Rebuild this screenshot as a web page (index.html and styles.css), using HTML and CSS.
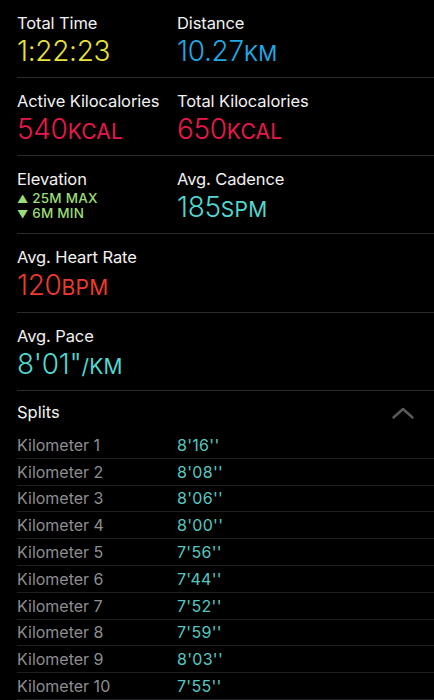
FILE: index.html
```html
<!DOCTYPE html>
<html>
<head>
<meta charset="utf-8">
<link rel="stylesheet" href="styles.css">
</head>
<body>
<div class="page">
  <div class="row">
    <div class="cell">
      <div class="label">Total Time</div>
      <div class="value yellow">1:22:23</div>
    </div>
    <div class="cell">
      <div class="label">Distance</div>
      <div class="value blue">10.27<span class="unit">KM</span></div>
    </div>
  </div>
  <div class="row">
    <div class="cell">
      <div class="label">Active Kilocalories</div>
      <div class="value pink">540<span class="unit">KCAL</span></div>
    </div>
    <div class="cell">
      <div class="label">Total Kilocalories</div>
      <div class="value pink">650<span class="unit">KCAL</span></div>
    </div>
  </div>
  <div class="row">
    <div class="cell">
      <div class="label">Elevation</div>
      <div class="elev first"><span class="tri">▲</span> 25M MAX</div>
      <div class="elev"><span class="tri">▼</span> 6M MIN</div>
    </div>
    <div class="cell">
      <div class="label">Avg. Cadence</div>
      <div class="value cyan">185<span class="unit">SPM</span></div>
    </div>
  </div>
  <div class="row tall">
    <div class="cell">
      <div class="label">Avg. Heart Rate</div>
      <div class="value red">120<span class="unit">BPM</span></div>
    </div>
  </div>
  <div class="row">
    <div class="cell">
      <div class="label">Avg. Pace</div>
      <div class="value cyan">8'01"<span class="unit">/KM</span></div>
    </div>
  </div>
  <div class="splits-head">
    <span class="splits-title">Splits</span>
    <svg class="chev" width="22" height="12" viewBox="0 0 22 12"><path d="M1.5 10.5 L11 2 L20.5 10.5" fill="none" stroke="#5a5a5e" stroke-width="2.4" stroke-linecap="round" stroke-linejoin="round"/></svg>
  </div>
  <div class="splits">
    <div class="split"><span class="km">Kilometer 1</span><span class="time">8'16''</span></div>
    <div class="split"><span class="km">Kilometer 2</span><span class="time">8'08''</span></div>
    <div class="split"><span class="km">Kilometer 3</span><span class="time">8'06''</span></div>
    <div class="split"><span class="km">Kilometer 4</span><span class="time">8'00''</span></div>
    <div class="split"><span class="km">Kilometer 5</span><span class="time">7'56''</span></div>
    <div class="split"><span class="km">Kilometer 6</span><span class="time">7'44''</span></div>
    <div class="split"><span class="km">Kilometer 7</span><span class="time">7'52''</span></div>
    <div class="split"><span class="km">Kilometer 8</span><span class="time">7'59''</span></div>
    <div class="split"><span class="km">Kilometer 9</span><span class="time">8'03''</span></div>
    <div class="split"><span class="km">Kilometer 10</span><span class="time">7'55''</span></div>
  </div>
</div>
</body>
</html>
```
FILE: styles.css
```css
html, body {
  margin: 0;
  padding: 0;
  background: #000;
}
body {
  font-family: Inter, "Liberation Sans", sans-serif;
  color: #fff;
  width: 434px;
  height: 700px;
  overflow: hidden;
}
.page {
  margin-left: 17px;
}
.row {
  display: grid;
  grid-template-columns: 160px 1fr;
  height: 78px;
  border-bottom: 1px solid #2c2c2e;
  padding-top: 12px;
  box-sizing: border-box;
}
.row.tall { height: 79px; }
.label {
  font-size: 16.5px;
  line-height: 22px;
  color: #f2f2f2;
  letter-spacing: -0.1px;
}
.value {
  font-size: 28px;
  line-height: 32px;
  margin-top: 1px;
  font-weight: 300;
  letter-spacing: -0.3px;
}
.unit {
  font-size: 21px;
  font-weight: 400;
  letter-spacing: 0.2px;
}
.yellow { color: #e8e23c; }
.blue { color: #21a8e2; }
.pink { color: #e8194b; }
.red { color: #ee3a2c; }
.cyan { color: #4fd9d2; }
.elev {
  font-size: 13.5px;
  line-height: 13.5px;
  font-weight: 500;
  color: #9cdd7a;
  letter-spacing: 0.2px;
}
.elev.first { margin-top: 2px; }
.tri { font-size: 11px; }
.splits-head {
  display: flex;
  align-items: center;
  justify-content: space-between;
  height: 41px;
  padding-right: 20px;
}
.splits-title {
  font-size: 16.5px;
  color: #f2f2f2;
}
.chev { margin-top: 2px; }
.split {
  display: grid;
  grid-template-columns: 160px 1fr;
  height: 26.8px;
  align-items: center;
  border-bottom: 1px solid #1e1e20;
  box-sizing: border-box;
  font-size: 16px;
}
.km { color: #8e8e92; }
.time { color: #56c8c2; letter-spacing: 0.3px; }
```
